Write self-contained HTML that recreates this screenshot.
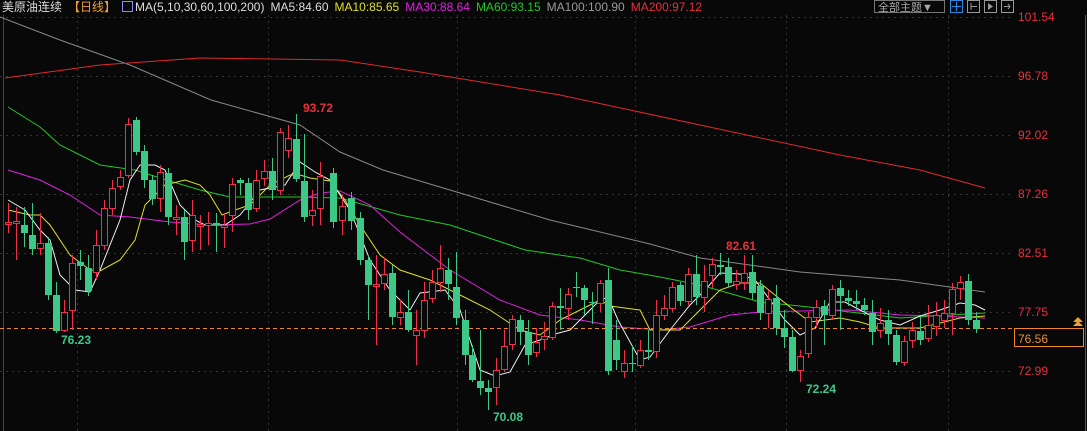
<!DOCTYPE html><html><head><meta charset="utf-8"><style>
body{margin:0;background:#080808;width:1087px;height:431px;overflow:hidden;font-family:"Liberation Sans","Noto Sans CJK SC",sans-serif;}
#hd{position:absolute;left:2px;top:0;font-size:12px;white-space:nowrap;line-height:14px;color:#ddd}
#hd span{margin-right:6px}
.ax{position:absolute;left:1018px;font-size:12px;color:#e8303c}
</style></head><body>
<svg width="1087" height="431" style="position:absolute;left:0;top:0" id="s">
<g stroke="#333" stroke-dasharray="2,4" stroke-width="1">
<line x1="0" y1="17.5" x2="1010" y2="17.5"/><line x1="0" y1="76.5" x2="1010" y2="76.5"/><line x1="0" y1="135.5" x2="1010" y2="135.5"/><line x1="0" y1="194.5" x2="1010" y2="194.5"/><line x1="0" y1="253.5" x2="1010" y2="253.5"/><line x1="0" y1="312.5" x2="1010" y2="312.5"/><line x1="0" y1="371.5" x2="1010" y2="371.5"/>
<line x1="77.5" y1="15" x2="77.5" y2="431"/><line x1="268.5" y1="15" x2="268.5" y2="431"/><line x1="457.5" y1="15" x2="457.5" y2="431"/><line x1="635.5" y1="15" x2="635.5" y2="431"/><line x1="786.5" y1="15" x2="786.5" y2="431"/><line x1="948.5" y1="15" x2="948.5" y2="431"/>
</g>
<line x1="3.5" y1="15" x2="3.5" y2="431" stroke="#444"/>
<line x1="1085.5" y1="15" x2="1085.5" y2="431" stroke="#555"/>
<g fill="none" stroke-width="1">
<polyline stroke="#888" points="0,17 60,40 130,65 211,100 300,125 340,152 383,170 450,190 550,220 650,244 700,258 800,272 900,280 985,292"/>
<polyline stroke="#e0282c" points="5,78 100,65 200,58 340,60 420,72 560,95 700,125 840,155 920,170 985,188"/>
<polyline stroke="#22c822" points="8,107 40,127 60,145 100,165 135,170 160,178 200,190 230,197 300,197 340,198 400,215 450,225 525,250 580,258 620,270 660,277 700,285 760,302 800,306 850,312 900,318 985,313"/>
<polyline stroke="#e020e0" points="8,170 40,180 70,195 100,215 130,217 170,222 210,225 250,224 270,219 300,200 320,193 340,191 370,205 400,232 450,270 500,300 540,315 580,320 620,327 660,330 690,327 730,315 760,312 800,311 850,310 900,315 940,316 985,318"/>
<polyline stroke="#e0e020" points="8,210 30,215 40,215 50,225 70,255 90,270 100,271 120,260 135,240 145,205 165,185 185,180 200,185 210,195 222,215 235,210 250,205 270,185 290,175 300,175 310,178 330,181 345,200 360,225 380,255 400,270 430,280 460,295 490,310 520,330 540,335 560,320 580,310 600,300 610,306 640,310 650,330 680,330 700,310 720,290 740,283 760,283 790,307 810,322 840,318 860,322 880,328 920,328 960,318 985,316"/>
<polyline stroke="#eee" points="8,200 25,210 40,230 50,240 60,275 75,290 90,292 100,270 120,220 130,180 140,165 155,165 165,170 180,205 195,220 205,225 225,225 240,215 260,190 285,185 300,162 315,172 330,180 350,210 370,260 390,290 410,310 420,293 445,290 460,310 470,340 480,370 495,376 510,372 525,345 540,340 555,334 570,330 590,310 600,300 608,297 618,320 640,360 650,357 670,330 690,305 705,290 720,273 740,274 755,280 770,300 785,320 800,335 815,328 830,302 845,302 860,310 880,320 900,325 920,316 940,310 960,303 975,305 985,310"/>
</g>
<line x1="0" y1="328.5" x2="1014" y2="328.5" stroke="#f08a20" stroke-dasharray="4,3"/>
<g id="c"></g>
<text x="303" y="112" fill="#e8303c" font-size="12" font-weight="bold">93.72</text>
<text x="61" y="344" fill="#3cc88a" font-size="12" font-weight="bold">76.23</text>
<text x="493" y="421" fill="#3cc88a" font-size="12" font-weight="bold">70.08</text>
<text x="726" y="250" fill="#e8303c" font-size="12" font-weight="bold">82.61</text>
<text x="806" y="393" fill="#3cc88a" font-size="12" font-weight="bold">72.24</text>
<rect x="1014.5" y="328.5" width="69" height="18" fill="#080808" stroke="#f08a20"/>
<text x="1018" y="343" fill="#e89030" font-size="12">76.56</text>
<path d="M1073 326 l5 -5 l5 5z M1073 322 l5 -5 l5 5z" fill="#f0a030"/>
<rect x="874.5" y="0.5" width="70" height="12" fill="none" stroke="#777"/>
<text x="878" y="11" fill="#aaa" font-size="11">全部主题▼</text>
<rect x="950.5" y="0.5" width="12" height="12" fill="none" stroke="#2a8ae0"/>
<path d="M956.5 2v9M952 6.5h9" stroke="#2a8ae0"/>
<rect x="967.5" y="0.5" width="12" height="12" fill="none" stroke="#999"/>
<rect x="984.5" y="0.5" width="12" height="12" fill="none" stroke="#999"/>
<path d="M988 3v7l5-3.5z" fill="#999"/>
<rect x="1001.5" y="0.5" width="12" height="12" fill="none" stroke="#999"/>
<path d="M971 3v7M971 6.5h6M1004 6.5h6M1008 4l2 2.5-2 2.5" stroke="#999" fill="none"/>
</svg>
<div id="hd"><span>美原油连续</span><span style="color:#f0a030">【日线】</span><span style="color:#ddd"><span style="display:inline-block;width:9px;height:9px;border:1px solid #88f;margin-right:2px;vertical-align:-1px"></span>MA(5,10,30,60,100,200)</span><span>MA5:84.60</span><span style="color:#e0e020">MA10:85.65</span><span style="color:#e020e0">MA30:88.64</span><span style="color:#22c822">MA60:93.15</span><span style="color:#999">MA100:100.90</span><span style="color:#e8303c">MA200:97.12</span></div>
<div class="ax" style="top:10px">101.54</div><div class="ax" style="top:69px">96.78</div><div class="ax" style="top:128px">92.02</div><div class="ax" style="top:187px">87.26</div><div class="ax" style="top:246px">82.51</div><div class="ax" style="top:305px">77.75</div><div class="ax" style="top:364px">72.99</div>
<script>
var d=[[8,222,224,'r',203,233],[16,221,223,'r',207,260],[24,225,233,'g',207,247],[32,235,249,'g',203,255],[40,243,248,'r',213,255],[48,243,295,'g',237,300],[56,295,331,'g',282,333],[64,312,330,'r',300,332],[72,263,310,'r',255,330],[80,262,266,'g',250,280],[88,268,291,'g',255,296],[96,245,272,'r',230,280],[104,208,245,'r',200,250],[112,188,208,'r',180,215],[120,177,186,'r',170,190],[128,124,175,'r',118,178],[136,120,152,'g',117,155],[144,151,180,'g',145,188],[152,180,199,'g',175,205],[160,172,198,'r',165,212],[168,173,217,'g',168,225],[176,217,219,'r',205,235],[184,217,242,'g',210,260],[192,215,240,'r',200,252],[200,224,226,'r',215,250],[208,223,225,'r',212,245],[216,223,225,'g',213,252],[224,225,227,'r',213,248],[232,184,215,'r',178,232],[240,180,183,'g',178,195],[248,183,210,'g',178,220],[256,180,208,'r',170,212],[264,171,178,'r',160,186],[272,171,190,'g',158,200],[280,132,190,'r',128,195],[288,138,150,'r',125,158],[296,139,179,'g',114,182],[304,181,217,'g',134,222],[312,210,215,'r',190,226],[320,176,208,'r',162,225],[333,173,222,'g',168,228],[342,206,220,'r',195,235],[351,198,221,'g',192,230],[360,218,260,'g',212,265],[368,260,285,'g',255,320],[376,284,286,'r',255,345],[384,274,283,'r',258,290],[392,273,317,'g',265,325],[400,312,317,'r',300,325],[408,312,330,'g',290,332],[416,330,335,'r',310,365],[424,300,330,'r',282,338],[432,282,298,'r',270,303],[440,268,282,'r',245,292],[448,270,284,'g',258,300],[456,287,318,'g',252,325],[465,320,355,'g',310,365],[472,355,380,'g',345,382],[480,381,388,'g',330,395],[488,388,392,'g',380,410],[496,370,387,'r',358,405],[504,346,369,'r',330,372],[512,319,344,'r',315,350],[520,320,332,'g',315,345],[528,332,355,'g',320,365],[536,342,352,'r',328,357],[544,336,339,'r',322,350],[552,306,337,'r',302,340],[560,306,308,'g',288,330],[568,294,308,'r',288,320],[576,287,288,'g',272,297],[584,288,300,'g',285,315],[592,302,303,'g',292,324],[600,283,303,'r',280,312],[608,280,371,'g',268,375],[616,340,360,'g',320,370],[624,363,371,'r',350,378],[632,363,364,'g',345,372],[640,350,365,'r',340,368],[648,350,352,'g',330,360],[656,315,351,'r',300,358],[664,308,315,'r',295,320],[672,287,308,'r',282,312],[680,285,301,'g',282,306],[688,274,301,'r',268,305],[696,274,297,'g',255,305],[704,281,297,'r',265,312],[712,264,275,'r',258,288],[720,265,267,'g',253,275],[728,267,283,'g',258,287],[736,281,284,'r',270,290],[744,273,282,'r',255,290],[752,272,293,'g',255,300],[760,286,313,'g',280,320],[768,299,313,'r',290,328],[776,298,328,'g',285,335],[784,328,337,'g',310,348],[792,337,371,'g',330,372],[800,356,370,'r',350,382],[808,317,353,'r',312,358],[816,307,317,'r',300,328],[824,306,315,'g',300,345],[832,289,315,'r',285,320],[840,288,296,'g',280,330],[848,298,301,'g',290,306],[856,301,304,'g',290,310],[864,305,310,'g',298,315],[872,313,332,'g',300,345],[880,323,330,'r',308,338],[888,320,334,'g',310,345],[896,335,362,'g',330,365],[904,341,362,'r',336,366],[912,330,340,'r',322,348],[920,331,340,'g',316,345],[928,325,338,'r',305,342],[936,315,326,'r',302,336],[944,313,320,'r',300,328],[952,289,313,'r',283,335],[960,282,288,'r',276,300],[968,281,320,'g',274,325],[976,320,329,'g',312,333]];
var h='';d.forEach(function(c){var x=c[0]-3,w=6,col=c[3]=='r'?'#f0304a':'#3cc887';h+='<line x1="'+(c[0]+.5)+'" y1="'+c[4]+'" x2="'+(c[0]+.5)+'" y2="'+c[5]+'" stroke="'+col+'"/>';var hh=Math.max(c[2]-c[1],1);if(c[3]=='r'){h+='<rect x="'+(x+.5)+'" y="'+(c[1]+.5)+'" width="'+w+'" height="'+hh+'" fill="#080808" stroke="'+col+'"/>'}else{h+='<rect x="'+x+'" y="'+c[1]+'" width="'+(w+1)+'" height="'+hh+'" fill="'+col+'"/>'}});
document.getElementById('c').innerHTML=h;
</script>
</body></html>
